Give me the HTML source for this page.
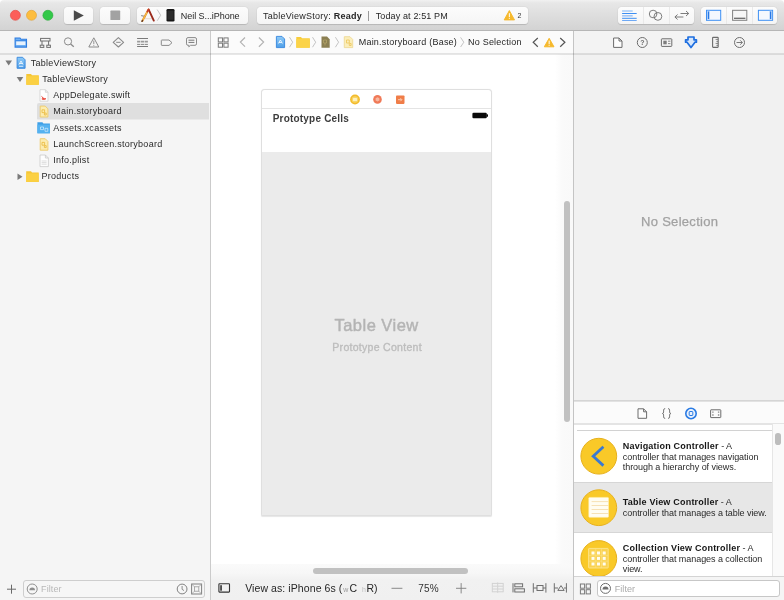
<!DOCTYPE html>
<html><head><meta charset="utf-8">
<style>
*{box-sizing:border-box;margin:0;padding:0}
html,body{width:784px;height:600px;overflow:hidden;background:#fff;font-family:"Liberation Sans",sans-serif;font-size:9px;color:#2b2b2b}
.abs{position:absolute}
#win{position:absolute;left:0;top:0;width:784px;height:600px;overflow:hidden;border-radius:4px 4px 0 0;background:#fff;will-change:transform}
#title{position:absolute;left:0;top:0;width:784px;height:30.5px;background:linear-gradient(#f1f1f1 0,#e7e7e7 10%,#d3d3d3 100%);border-bottom:1px solid #b6b6b6}
.tl{position:absolute;top:10px;width:10.5px;height:10.5px;border-radius:50%}
.btn{position:absolute;top:7px;height:17px;background:linear-gradient(#fcfcfc,#f5f5f5);border-radius:3.5px;box-shadow:0 0 0 0.5px rgba(0,0,0,.04),0 0.5px .8px rgba(0,0,0,.13)}
.sep{position:absolute;top:0;width:1px;height:17px;background:#e9e9e9}
.t{position:absolute;white-space:pre;line-height:1}
.f9{font-size:9px}
.nv{font-size:9px;letter-spacing:.27px;color:#2a2a2a}
.lib{font-size:9px;letter-spacing:-.06px;color:#2a2a2a}
.lib b{letter-spacing:.21px;color:#151515}
#icons{position:absolute;left:0;top:0;width:784px;height:600px}
</style></head><body>
<div id="win">
<!-- title bar -->
<div id="title">
  <div class="btn" style="left:63.5px;width:29.5px"></div>
  <div class="btn" style="left:100px;width:30px"></div>
  <div class="btn" style="left:137px;width:111px"></div>
  <div class="btn" style="left:256.5px;width:271.5px"></div>
  <div class="btn" style="left:617.5px;width:76.5px"><div class="sep" style="left:25px"></div><div class="sep" style="left:51px"></div></div>
  <div class="btn" style="left:700.5px;width:76px"><div class="sep" style="left:25.5px"></div><div class="sep" style="left:51px"></div></div>
  <span class="t f9" style="left:180.8px;top:11.6px;letter-spacing:-.05px;color:#262626">Neil S...iPhone</span>
  <span class="t f9" style="left:263px;top:11.6px;letter-spacing:.24px;color:#262626">TableViewStory: <b>Ready</b></span>
  <div class="abs" style="left:367.6px;top:11px;width:1px;height:10px;background:#9a9a9a"></div>
  <span class="t f9" style="left:375.7px;top:11.6px;letter-spacing:.13px;color:#262626">Today at 2:51 PM</span>
  <span class="t" style="left:517.6px;top:11.7px;font-size:7px;color:#333">2</span>
</div>
<!-- second bar -->
<div class="abs" style="left:0;top:31px;width:210px;height:23px;background:#f5f5f5"></div>
<div class="abs" style="left:211px;top:31px;width:362px;height:23px;background:#fbfbfb"></div>
<div class="abs" style="left:574px;top:31px;width:210px;height:23px;background:#f3f3f3"></div>
<div class="abs" style="left:0;top:53px;width:784px;height:2px;background:rgba(0,0,0,.095);z-index:5"></div>
<span class="t f9" style="left:358.7px;top:37.6px;letter-spacing:.22px;color:#262626">Main.storyboard (Base)</span>
<span class="t f9" style="left:468px;top:37.6px;letter-spacing:.22px;color:#262626">No Selection</span>
<!-- left navigator -->
<div class="abs" style="left:0;top:54px;width:210px;height:546px;background:#f5f5f5"></div>
<div class="abs" style="left:37px;top:103px;width:172px;height:16px;background:#dfdfdf;border-radius:2px 0 0 0"></div><div class="abs" style="left:37px;top:119px;width:172px;height:1px;background:#eaeaea;border-radius:0 0 0 2px"></div>
<span class="t nv" style="left:30.7px;top:59px">TableViewStory</span>
<span class="t nv" style="left:42.3px;top:75px">TableViewStory</span>
<span class="t nv" style="left:53.2px;top:91px">AppDelegate.swift</span>
<span class="t nv" style="left:53.2px;top:107px">Main.storyboard</span>
<span class="t nv" style="left:53.2px;top:124px">Assets.xcassets</span>
<span class="t nv" style="left:53.2px;top:140px">LaunchScreen.storyboard</span>
<span class="t nv" style="left:53.2px;top:156px">Info.plist</span>
<span class="t nv" style="left:41.5px;top:172px">Products</span>
<div class="abs" style="left:23px;top:580px;width:182px;height:18px;border:1px solid #cecece;border-radius:3px;background:#f6f6f6"></div>
<span class="t f9" style="left:41.1px;top:585px;letter-spacing:.08px;color:#b8b8b8">Filter</span>
<!-- vertical dividers -->
<div class="abs" style="left:210px;top:31px;width:1px;height:569px;background:#cbcbcb"></div>
<div class="abs" style="left:573px;top:31px;width:1px;height:569px;background:#c4c4c4"></div>
<!-- center canvas -->
<div class="abs" style="left:211px;top:54px;width:362px;height:546px;background:#fff"></div>
<div class="abs" style="left:555px;top:54px;width:18px;height:510px;background:linear-gradient(90deg,#fff 0,#fafafa 7px,#f9f9f9 100%)"></div>
<div class="abs" style="left:564px;top:201px;width:6px;height:220.5px;border-radius:3px;background:#c1c1c1"></div>
<div class="abs" style="left:261px;top:89px;width:231px;height:427px;background:#ebebeb;border:1px solid #dfdfdf;border-radius:3.5px 3.5px 1.5px 1.5px;box-shadow:0 .5px 1px rgba(0,0,0,.10)"></div>
<div class="abs" style="left:262px;top:90px;width:229px;height:62px;background:#fff;border-radius:3px 3px 0 0"></div>
<div class="abs" style="left:262px;top:108px;width:229px;height:1px;background:#e4e4e4"></div>
<span class="t" style="left:272.7px;top:114px;font-size:10px;font-weight:bold;letter-spacing:.2px;color:#3d3d3d">Prototype Cells</span>
<span class="t" style="left:334.5px;top:317px;font-size:16.5px;letter-spacing:.47px;color:#b4b4b4;-webkit-text-stroke:.45px #b4b4b4">Table View</span>
<span class="t" style="left:332.3px;top:341.5px;font-size:10.5px;letter-spacing:.29px;color:#bdbdbd;-webkit-text-stroke:.35px #bdbdbd">Prototype Content</span>
<div class="abs" style="left:211px;top:564px;width:362px;height:36px;background:linear-gradient(#fafafa 0,#f7f7f7 9px,#f1f1f1 16px,#f0f0f0 100%)"></div>
<div class="abs" style="left:312.5px;top:567.5px;width:155.5px;height:6.5px;border-radius:3.25px;background:#c1c1c1"></div>
<span class="t" style="left:245.2px;top:582.9px;font-size:10.5px;letter-spacing:.085px;color:#262626">View as: iPhone 6s (</span>
<span class="t" style="left:343.2px;top:585.9px;font-size:7px;color:#9a9a9a">w</span>
<span class="t" style="left:349.6px;top:582.9px;font-size:10.5px;color:#262626">C</span>
<span class="t" style="left:362.1px;top:585.9px;font-size:7px;color:#bdbdbd">h</span>
<span class="t" style="left:366.5px;top:582.9px;font-size:10.5px;color:#262626">R)</span>
<span class="t" style="left:418.3px;top:583.5px;font-size:10px;letter-spacing:.13px;color:#333">75%</span>
<!-- right inspector -->
<div class="abs" style="left:574px;top:54px;width:210px;height:347px;background:#f1f1f1"></div>
<span class="t" style="left:641px;top:215.3px;font-size:13px;letter-spacing:.3px;color:#a2a2a2;-webkit-text-stroke:.25px #a2a2a2">No Selection</span>
<div class="abs" style="left:574px;top:401px;width:210px;height:199px;background:#fff"></div>
<div class="abs" style="left:574px;top:400px;width:210px;height:2px;background:rgba(0,0,0,.115)"></div>
<div class="abs" style="left:574px;top:402px;width:210px;height:21px;background:#fbfbfb"></div>
<div class="abs" style="left:574px;top:423px;width:210px;height:2px;background:rgba(0,0,0,.105)"></div>
<div class="abs" style="left:577px;top:429.5px;width:195px;height:1px;background:#d2d2d2"></div>
<div class="abs" style="left:574px;top:481.5px;width:198px;height:51px;background:#e7e7e7"></div>
<div class="abs" style="left:574px;top:481.5px;width:198px;height:1px;background:#d6d6d6"></div>
<div class="abs" style="left:574px;top:532px;width:198px;height:1px;background:#d6d6d6"></div>
<div class="abs" style="left:772px;top:424px;width:12px;height:152px;background:#fafafa;border-left:1px solid #e6e6e6"></div>
<div class="abs" style="left:775.4px;top:432.5px;width:5.6px;height:12.8px;border-radius:2.8px;background:#bdbdbd"></div>
<span class="t lib" style="left:622.8px;top:442px"><b>Navigation Controller</b> - A</span>
<span class="t lib" style="left:622.8px;top:452.7px">controller that manages navigation</span>
<span class="t lib" style="left:622.8px;top:462.9px">through a hierarchy of views.</span>
<span class="t lib" style="left:622.8px;top:497.5px"><b>Table View Controller</b> - A</span>
<span class="t lib" style="left:622.8px;top:509px">controller that manages a table view.</span>
<span class="t lib" style="left:622.8px;top:544.3px"><b>Collection View Controller</b> - A</span>
<span class="t lib" style="left:622.8px;top:554.7px">controller that manages a collection</span>
<span class="t lib" style="left:622.8px;top:564.9px">view.</span>
<!-- ICONS-LIB-PLACEHOLDER -->
<div class="abs" style="left:574px;top:576px;width:210px;height:24px;background:#f5f5f5;border-top:1px solid #d4d4d4"></div>
<div class="abs" style="left:596.8px;top:579.6px;width:183px;height:17.6px;border:1px solid #c7c7c7;border-radius:3px;background:#fff"></div>
<span class="t f9" style="left:614.7px;top:585px;letter-spacing:.08px;color:#aaaaaa">Filter</span>
<svg id="icons" viewBox="0 0 784 600">
<defs>
<clipPath id="libclip"><rect x="574" y="430" width="198" height="146"/></clipPath>
<linearGradient id="bluedoc" x1="0" y1="0" x2="0" y2="1"><stop offset="0" stop-color="#8fcbf8"/><stop offset="1" stop-color="#4f9fe8"/></linearGradient>
</defs>
<!-- traffic lights -->
<circle cx="15.4" cy="15.3" r="5" fill="#fc5f59" stroke="#e0483f" stroke-width=".6"/>
<circle cx="31.5" cy="15.3" r="5" fill="#fdbd3f" stroke="#dfa032" stroke-width=".6"/>
<circle cx="47.9" cy="15.3" r="5" fill="#33c849" stroke="#27aa35" stroke-width=".6"/>
<!-- title bar icons -->
<path d="M73.8 10.3 L73.8 20.8 L83.8 15.55 Z" fill="#4a4a4a"/>
<rect x="110.4" y="10.6" width="9.8" height="9.5" rx=".6" fill="#a2a2a2"/>
<!-- xcode icon -->
<g stroke-linecap="round" fill="none">
<path d="M145 18.7 H152.4" stroke="#e6d8cf" stroke-width="1"/>
<path d="M141.6 15.6 L145.4 16.6" stroke="#9c9c9c" stroke-width="1.3"/>
<path d="M148.7 9.6 L153.8 20.6" stroke="#9b2a1c" stroke-width="1.9"/>
<path d="M142.3 21 L148.4 9.8" stroke="#e8932c" stroke-width="2"/>
<path d="M143.2 19.4 L147.6 11.4" stroke="#f8cd55" stroke-width=".8"/>
<path d="M147.5 11.4 L148.5 9.6" stroke="#c43a2a" stroke-width="1.9"/>
<path d="M142 21.3 L142.5 20.5" stroke="#5a3a2a" stroke-width="1.4"/>
</g>
<path d="M157.2 9.6 L160.7 15.2 L157.2 20.8" stroke="#c6c6c6" stroke-width="1" fill="none"/>
<rect x="166.5" y="9" width="8" height="12.6" rx="1.3" fill="#161616"/>
<rect x="167.5" y="10.6" width="6" height="9.2" fill="#2c2c2c"/>
<!-- status warning -->
<path d="M509.35 10.6 L514.5 19.9 L504.2 19.9 Z" fill="#f6b92d" stroke="#f6b92d" stroke-width="1" stroke-linejoin="round"/>
<rect x="508.85" y="13.2" width="1" height="3.8" fill="#fff"/><rect x="508.85" y="17.8" width="1" height="1" fill="#fff"/>
<!-- editor segment icons -->
<g stroke="#3d8ff3" stroke-width="1" fill="none">
<path d="M622.1 11 H632.7" stroke="#7db4f6"/><path d="M622.1 13.5 H636.7"/><path d="M622.1 15.9 H632.7" stroke="#6ea9f5"/><path d="M622.1 18.3 H636.7"/><path d="M622.1 20.5 H636.7" stroke="#6ea9f5"/>
</g>
<g stroke="#6e6e6e" stroke-width=".9" fill="none">
<circle cx="653.1" cy="14" r="3.8"/><circle cx="657.9" cy="16.4" r="3.9"/>
<path d="M680.5 13.5 H688.6 M686 11 L688.7 13.5 L686 16"/>
<path d="M683.4 17 H675 M677.6 14.5 L674.9 17 L677.6 19.5"/>
</g>
<!-- view segment icons -->
<g fill="none" stroke-width="1">
<rect x="706.5" y="10.3" width="14.2" height="10" stroke="#3d8ff3" fill="#f4f8fe"/>
<rect x="707" y="10.8" width="2.8" height="9" fill="#b9d6fa" stroke="none"/>
<path d="M708.5 11.5 V19" stroke="#2a78e4" stroke-width="1.2"/>
<rect x="732.6" y="10.3" width="14.2" height="10" stroke="#808080" fill="#f6f6f6"/>
<path d="M734 18.3 H745.4" stroke="#6a6a6a" stroke-width="1.3"/>
<rect x="758.4" y="10.3" width="14.2" height="10" stroke="#3d8ff3" fill="#f4f8fe"/>
<rect x="769.3" y="10.8" width="2.8" height="9" fill="#b9d6fa" stroke="none"/>
<path d="M770.6 11.5 V19" stroke="#2a78e4" stroke-width="1.2"/>
</g>
<!-- navigator selector icons -->
<g fill="none" stroke="#8a8a8a" stroke-width="1">
<path d="M15.1 38 H20 L21 39.3 H26.5 V47.1 H15.1 Z" stroke="#2f7de1" fill="#6fb0f3" stroke-width="1.1"/>
<rect x="16.2" y="41.4" width="9.2" height="3.6" fill="#e8f2fd" stroke="none"/>
<path d="M15.6 40.6 H26" stroke="#2f7de1" stroke-width=".8"/>
<g stroke="#6f6f6f">
<rect x="40.6" y="38.4" width="9.4" height="2.6"/>
<path d="M42 41 V45 M48.6 41 V45"/>
<rect x="40.2" y="45.2" width="3.6" height="2.2"/><rect x="46.8" y="45.2" width="3.6" height="2.2"/>
</g>
<circle cx="68" cy="41.4" r="3.6"/><path d="M70.6 44 L73.8 46.8" stroke-width="1.3"/>
<path d="M93.8 37.8 L98.8 47 H88.8 Z" stroke-linejoin="round"/><path d="M93.8 40.6 V44.2 M93.8 45.2 V46" stroke-width=".9"/>
<path d="M118.4 37.6 L123.6 42.3 L118.4 47 L113.2 42.3 Z" stroke-linejoin="round" stroke-width="1.1"/><path d="M116.2 42.3 H120.6"/>
<g stroke="#7a7a7a">
<path d="M137.1 38.5 H148" stroke-width="1"/>
<path d="M137.1 41.6 H148" stroke-dasharray="3.2 .6" stroke-width="1.9" stroke="#9a9a9a"/>
<path d="M137.1 44.4 H148" stroke-dasharray="3.2 .6" stroke-width=".9"/>
<path d="M137.1 46.5 H148" stroke-width="1"/>
</g>
<path d="M161.8 40 H169 L172 42.7 L169 45.4 H161.8 Q161.3 45.4 161.3 44.9 V40.5 Q161.3 40 161.8 40 Z" stroke-linejoin="round"/>
<path d="M188 37.6 H195 Q196.5 37.6 196.5 39.1 V43.8 Q196.5 45.3 195 45.3 H190.5 L188.8 46.8 V45.3 H188 Q186.5 45.3 186.5 43.8 V39.1 Q186.5 37.6 188 37.6 Z"/>
<path d="M188.5 40.2 H194.4 M188.5 42.4 H194.4" stroke="#777"/>
</g>
<!-- jump bar -->
<g fill="none" stroke="#7b7b7b" stroke-width="1">
<rect x="218.3" y="37.9" width="4.2" height="4"/><rect x="223.9" y="37.9" width="4.2" height="4"/><rect x="218.3" y="43.2" width="4.2" height="4"/><rect x="223.9" y="43.2" width="4.2" height="4"/>
<path d="M245 37.5 L240.4 42.1 L245 46.7 M258.9 37.5 L263.6 42.1 L258.9 46.7" stroke="#b2b2b2" stroke-width="1.2"/>
<path d="M289.5 37.2 L292.7 42.2 L289.5 47.2 M312.5 37.2 L315.7 42.2 L312.5 47.2 M335.4 37.2 L338.6 42.2 L335.4 47.2 M460.6 37.4 L463.8 42.2 L460.6 47" stroke="#bdbdbd" stroke-width=".9"/>
</g>
<path d="M276.4 36.4 H282 L284.6 39 V47.6 H276.4 Z" fill="url(#bluedoc)" stroke="#3586de" stroke-width=".9"/>
<path d="M278.4 43.5 L280.4 40 L282.4 43.5 M279 42.5 H281.8" stroke="#fff" stroke-width=".8" fill="none"/>
<path d="M296.3 37 H301 L302 38.2 H309.8 V47.7 H296.3 Z" fill="#f8cd3c"/><rect x="296.3" y="39" width="13.5" height="8.7" fill="#fbd349"/>
<path d="M321.5 36.6 H327 L329.7 39.3 V47.7 H321.5 Z" fill="#8b7f52"/><path d="M323.5 40 h3 v3 h-3z M325 43 v2.5" stroke="#b8a86a" stroke-width=".7" fill="none"/>
<path d="M344.3 36.7 H350 L352.7 39.4 V47.6 H344.3 Z" fill="#fbeebb" stroke="#ecd58d" stroke-width=".8"/><path d="M346.5 40 h2.8 v3 h-2.8z M349.3 43.5 h1.8 v2 h-1.8z" stroke="#edc558" stroke-width=".8" fill="none"/>
<path d="M537.8 38 L533.2 42.3 L537.8 46.7 M560.2 38 L564.9 42.3 L560.2 46.7" stroke="#555" stroke-width="1.2" fill="none"/>
<path d="M549.15 38.3 L554 46.8 L544.3 46.8 Z" fill="#f6b92d" stroke="#f6b92d" stroke-width="1" stroke-linejoin="round"/>
<rect x="548.65" y="40.6" width="1" height="3.5" fill="#fff"/><rect x="548.65" y="44.8" width="1" height="1" fill="#fff"/>
<!-- inspector selector -->
<g fill="none" stroke="#6c6c6c" stroke-width="1">
<path d="M613.6 38 H619 L622 41 V47.4 H613.6 Z M619 38 V41 H622" fill="#fdfdfd"/>
<circle cx="642.3" cy="42.5" r="5"/>
<rect x="661.4" y="38.8" width="10.4" height="7.6" rx=".6"/><rect x="663.3" y="40.7" width="3.4" height="3.6" fill="#7c7c7c" stroke="none"/><path d="M668 41.2 H670.4 M668 43.6 H670.4" stroke-width=".8"/>
<path d="M688 37 H694 V39.8 H696.4 V42.2 H695 L691 47.6 L687 42.2 H685.6 V39.8 H688 Z" stroke="#1f6fe0" stroke-width="1.7" stroke-linejoin="round" fill="#d7e7fb"/>
<rect x="712.6" y="37.4" width="5.6" height="10" rx=".6" stroke-width="1.1"/><path d="M715.6 39.4 H718 M716.4 41.4 H718 M715.6 43.4 H718 M716.4 45.4 H718" stroke-width=".8"/>
<circle cx="739.5" cy="42.5" r="5"/><path d="M736.5 42.5 H742.3 M740.2 40.3 L742.4 42.5 L740.2 44.7" stroke-width=".9"/>
</g>
<text x="642.3" y="45.1" font-family="Liberation Sans, sans-serif" font-size="7" font-weight="bold" fill="#6c6c6c" text-anchor="middle">?</text>
<!-- navigator tree icons -->
<path d="M5.4 60.6 H12 L8.7 65.6 Z" fill="#7a7a7a"/>
<path d="M16.7 76.9 H23.3 L20 81.9 Z" fill="#7a7a7a"/>
<path d="M17.5 173.4 V180 L22.5 176.7 Z" fill="#7a7a7a"/>
<path d="M17.1 57.3 H22.6 L25.1 59.8 V68.3 H17.1 Z" fill="url(#bluedoc)" stroke="#3586de" stroke-width=".9"/>
<path d="M19 64.5 L21 61 L23 64.5 M19.6 63.5 H22.4 M19 66.3 H23.2" stroke="#fff" stroke-width=".8" fill="none"/>
<path d="M26.3 74 H31 L32 75.3 H38.8 V84.8 H26.3 Z" fill="#f6c635"/><rect x="26.3" y="76.2" width="12.5" height="8.6" fill="#fbd043"/>
<path d="M26.2 171.2 H31 L32 172.5 H38.7 V181.9 H26.2 Z" fill="#f6c635"/><rect x="26.2" y="173.4" width="12.5" height="8.5" fill="#fbd043"/>
<path d="M40 89.7 H45.4 L48 92.3 V101.2 H40 Z M45.4 89.7 V92.3 H48" fill="#fff" stroke="#cfcfcf" stroke-width=".8"/>
<path d="M41.6 96.4 C43 98 44.5 98.8 46 98.6 C45.4 99.6 43.4 100 41.8 98.9 C43.3 98.9 43 97.8 41.6 96.4 Z" fill="#e8392b" stroke="#e8392b" stroke-width=".6"/>
<path d="M40.2 106.1 H45.2 L47.9 108.8 V117 H40.2 Z" fill="#fcecb0" stroke="#edcb68" stroke-width=".9"/><path d="M42 109.8 h2.6 v2.8 h-2.6z M44.4 113 h1.8 v2 h-1.8z" stroke="#eab93c" stroke-width=".8" fill="none"/>
<path d="M40.2 138.7 H45.2 L47.9 141.4 V150.2 H40.2 Z" fill="#fcecb0" stroke="#edcb68" stroke-width=".9"/><path d="M42 142.4 h2.6 v2.8 h-2.6z M44.4 145.6 h1.8 v2 h-1.8z" stroke="#eab93c" stroke-width=".8" fill="none"/>
<path d="M37.4 122.3 H42.4 L43.4 123.6 H49.9 V133.3 H37.4 Z" fill="#3f9fe6"/><rect x="37.4" y="124.6" width="12.5" height="8.7" fill="#55b2f0"/>
<path d="M40.5 127 h3 v2.6 h-3z M45 128.3 h2.8 v3 h-2.8z" stroke="#d8eefc" stroke-width=".7" fill="none"/>
<path d="M40 155 H45.4 L48.4 158 V166.6 H40 Z M45.4 155 V158 H48.4" fill="#fdfdfd" stroke="#c9c9c9" stroke-width=".8"/>
<path d="M41.6 161 H46.6 M41.6 162.6 H46.6 M41.6 164.2 H46.6" stroke="#d0d0d0" stroke-width=".7"/>
<!-- left bottom -->
<g fill="none" stroke="#7a7a7a" stroke-width="1">
<path d="M7 589.2 H16 M11.5 584.7 V593.7" stroke="#6a6a6a"/>
<circle cx="32.2" cy="589" r="5" stroke="#8e8e8e"/>
<path d="M29.4 590.2 A2.8 2.8 0 0 1 35 590.2 Z" fill="#8e8e8e" stroke="none"/>
<circle cx="182.1" cy="589" r="4.9" stroke="#808080"/><path d="M182.1 586 V589.3 L184 590.6" stroke="#808080" stroke-width=".9"/>
<rect x="191.6" y="584" width="10" height="10" stroke="#808080"/><rect x="194.4" y="586.8" width="4.4" height="4.4" stroke="#9a9a9a" stroke-width=".8"/>
<path d="M191.6 584 L194.4 586.8 M201.6 584 L198.8 586.8 M191.6 594 L194.4 591.2 M201.6 594 L198.8 591.2" stroke="#9a9a9a" stroke-width=".7"/>
</g>
<!-- scene dock icons -->
<circle cx="355" cy="99.5" r="4.9" fill="#f3bb2b"/><circle cx="355" cy="99.5" r="3.3" fill="#f9d564"/><rect x="353" y="98" width="4" height="3" rx=".5" fill="#fdf0c0"/>
<circle cx="377.5" cy="99.4" r="4.3" fill="#f07a58"/><path d="M375.6 98.2 L377.5 97.2 L379.4 98.2 V100.6 L377.5 101.6 L375.6 100.6 Z" fill="#f8b8a0"/>
<rect x="396" y="95.5" width="8.5" height="8.4" rx=".8" fill="#f07d48"/><path d="M398 99.7 H401.6 M400.4 98.2 L401.9 99.7 L400.4 101.2" stroke="#fbd2bb" stroke-width=".9" fill="none"/>
<!-- battery -->
<rect x="472.4" y="112.8" width="14.4" height="5.5" rx="1.2" fill="#0a0a0a"/><rect x="486.6" y="114.3" width="1.4" height="2.5" rx=".5" fill="#0a0a0a"/>
<!-- canvas bottom bar -->
<g fill="none" stroke="#333" stroke-width="1">
<rect x="218.9" y="583.8" width="10.6" height="8.3" rx=".6" stroke-width="1.1"/><rect x="220.3" y="585.2" width="1.5" height="5.5" fill="#222" stroke="none"/>
<path d="M391.5 588.3 H402.4 M456 588.3 H466.3 M461.15 583.1 V593.4" stroke="#7e7e7e" stroke-width=".9"/>
</g>
<g fill="none" stroke="#d2d2d2" stroke-width="1">
<rect x="492.3" y="583.4" width="10.9" height="8.4"/><path d="M497.7 582.4 V592.8 M492.3 586.2 H503.2 M492.3 589 H503.2"/>
</g>
<g fill="none" stroke="#6e6e6e" stroke-width="1">
<path d="M513 583.2 V592.4"/><rect x="514.8" y="583.8" width="7.8" height="3"/><rect x="514.8" y="588.8" width="9.6" height="3.2"/>
<path d="M533.3 583.2 V592.6 M545.9 583.2 V592.6 M533.3 588 H537 M543 588 H545.9"/><rect x="537" y="585.5" width="6" height="5"/>
<path d="M554.3 583.2 V592.6 M566.4 583.2 V592.6 M554.3 588 H558 M564 588 H566.4"/><path d="M561 585.6 L564.2 590.4 H557.8 Z"/>
</g>
<!-- library selector -->
<g fill="none" stroke="#6c6c6c" stroke-width="1">
<path d="M638 408.8 H643.6 L646.6 411.8 V418.3 H638 Z M643.6 408.8 V411.8 H646.6" fill="#fdfdfd"/>
<path d="M665.2 408.6 Q663.6 408.6 663.6 410 V412 Q663.6 413.4 662.4 413.5 Q663.6 413.6 663.6 415 V417 Q663.6 418.4 665.2 418.4 M668 408.6 Q669.6 408.6 669.6 410 V412 Q669.6 413.4 670.8 413.5 Q669.6 413.6 669.6 415 V417 Q669.6 418.4 668 418.4" stroke-width=".9"/>
<circle cx="691" cy="413.5" r="5.2" stroke="#2a7be4" stroke-width="1.6" fill="#eaf2fd"/><rect x="689.2" y="411.5" width="3.6" height="4" rx=".6" stroke="#2a7be4" stroke-width="1"/>
<rect x="710.6" y="409.8" width="10.2" height="7.8" rx=".4"/><path d="M712.2 412.1 h1.4 M717.9 412.1 h1.4 M712.2 415 h1.4 M717.9 415 h1.4" stroke-width="1.4" stroke="#8a8a8a"/>
</g>
<!-- library items -->
<g clip-path="url(#libclip)">
<circle cx="598.8" cy="456.2" r="17.9" fill="#f9c928" stroke="#e6b01e" stroke-width="1"/>
<path d="M603.4 446.8 L593.2 456.2 L603.4 465.6" stroke="#3a79d2" stroke-width="2.8" fill="none"/>
<circle cx="598.8" cy="507.7" r="17.9" fill="#f9c928" stroke="#e6b01e" stroke-width="1"/>
<rect x="588.8" y="497.4" width="19.7" height="19.9" rx=".8" fill="#fffdf2" stroke="#fdeeb5" stroke-width=".6"/>
<path d="M591.6 501.6 H608.3 M591.6 505.5 H608.3 M591.6 509.5 H608.3 M591.6 513.5 H608.3" stroke="#f0cf8c" stroke-width=".6"/>
<circle cx="598.8" cy="558.5" r="17.9" fill="#f9c928" stroke="#e6b01e" stroke-width="1"/>
<rect x="588.6" y="548.4" width="19.6" height="19.6" rx=".6" fill="#fad251" stroke="#fde89a" stroke-width=".8"/>
<path d="M595.75 548.4 V568 M601.4 548.4 V568 M588.6 555.7 H608.2 M588.6 561.2 H608.2" stroke="#fce28a" stroke-width=".6" fill="none"/>
<g fill="#fffdf0">
<rect x="591.5" y="551.5" width="3" height="3"/><rect x="597" y="551.5" width="3" height="3"/><rect x="602.7" y="551.5" width="3" height="3"/>
<rect x="591.5" y="556.9" width="3" height="3"/><rect x="597" y="556.9" width="3" height="3"/><rect x="602.7" y="556.9" width="3" height="3"/>
<rect x="591.5" y="562.5" width="3" height="3"/><rect x="597" y="562.5" width="3" height="3"/><rect x="602.7" y="562.5" width="3" height="3"/>
</g>
</g>
<!-- right bottom -->
<g fill="none" stroke="#7a7a7a" stroke-width="1">
<rect x="580.4" y="584" width="4.2" height="4.2"/><rect x="586.2" y="584" width="4.2" height="4.2"/><rect x="580.4" y="589.7" width="4.2" height="4.2"/><rect x="586.2" y="589.7" width="4.2" height="4.2"/>
<circle cx="605.5" cy="588.4" r="5" stroke="#6e6e6e"/>
<path d="M602.5 589.4 A3 3 0 0 1 608.5 589.4 Z" fill="#6e6e6e" stroke="none"/>
</g>
</svg>
</div>
</body></html>
